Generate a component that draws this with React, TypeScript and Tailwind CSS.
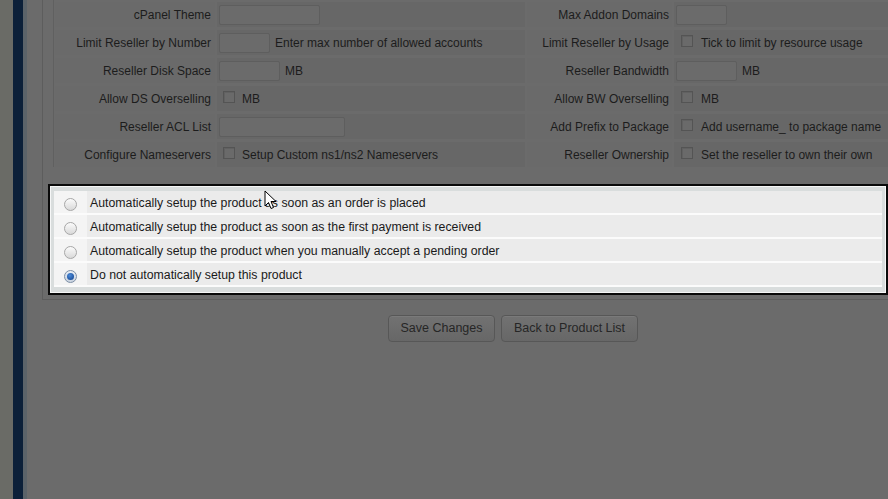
import React from "react";

const Input = ({ w }: { w: string }) => (
  <span className={`inline-block h-[20px] ${w} rounded-[2px] border border-[#5e5e5e] bg-[#6b6b6b]`} />
);

const Check = () => (
  <span className="inline-block h-[12px] w-[12px] border border-[#545454] bg-[#6a6a6a] shadow-[inset_1px_1px_0_#616161]" />
);

type Row = { l: string; left: React.ReactNode; r: string; right: React.ReactNode };

const rows: Row[] = [
  {
    l: "cPanel Theme",
    left: <Input w="w-[101px]" />,
    r: "Max Addon Domains",
    right: <Input w="w-[51px]" />,
  },
  {
    l: "Limit Reseller by Number",
    left: (
      <>
        <Input w="w-[51px]" />
        <span className="ml-[5px]">Enter max number of allowed accounts</span>
      </>
    ),
    r: "Limit Reseller by Usage",
    right: (
      <>
        <span className="ml-[5px]"><Check /></span>
        <span className="ml-[8px]">Tick to limit by resource usage</span>
      </>
    ),
  },
  {
    l: "Reseller Disk Space",
    left: (
      <>
        <Input w="w-[61px]" />
        <span className="ml-[5px]">MB</span>
      </>
    ),
    r: "Reseller Bandwidth",
    right: (
      <>
        <Input w="w-[61px]" />
        <span className="ml-[5px]">MB</span>
      </>
    ),
  },
  {
    l: "Allow DS Overselling",
    left: (
      <>
        <span className="ml-[4px]"><Check /></span>
        <span className="ml-[7px]">MB</span>
      </>
    ),
    r: "Allow BW Overselling",
    right: (
      <>
        <span className="ml-[5px]"><Check /></span>
        <span className="ml-[8px]">MB</span>
      </>
    ),
  },
  {
    l: "Reseller ACL List",
    left: <Input w="w-[126px]" />,
    r: "Add Prefix to Package",
    right: (
      <>
        <span className="ml-[5px]"><Check /></span>
        <span className="ml-[8px]">Add username_ to package name</span>
      </>
    ),
  },
  {
    l: "Configure Nameservers",
    left: (
      <>
        <span className="ml-[4px]"><Check /></span>
        <span className="ml-[7px]">Setup Custom ns1/ns2 Nameservers</span>
      </>
    ),
    r: "Reseller Ownership",
    right: (
      <>
        <span className="ml-[5px]"><Check /></span>
        <span className="ml-[8px]">Set the reseller to own their own</span>
      </>
    ),
  },
];

const options = [
  "Automatically setup the product as soon as an order is placed",
  "Automatically setup the product as soon as the first payment is received",
  "Automatically setup the product when you manually accept a pending order",
  "Do not automatically setup this product",
];

const Radio = ({ checked }: { checked?: boolean }) =>
  checked ? (
    <span className="flex h-[13px] w-[13px] items-center justify-center rounded-full border border-[#7d8fa6] bg-gradient-to-b from-[#e9eef5] to-[#c9d3df]">
      <span className="h-[7px] w-[7px] rounded-full bg-[radial-gradient(circle_at_40%_35%,#4b8ad8,#0f3f8a)]" />
    </span>
  ) : (
    <span className="block h-[13px] w-[13px] rounded-full border border-[#a7a7a7] bg-gradient-to-b from-[#fbfbfb] to-[#d9d9d9]" />
  );

export default function App() {
  return (
    <div className="relative flex h-[499px] w-[888px] overflow-hidden bg-[#6b6b6b] font-['Liberation_Sans',Arial,sans-serif] text-[12px] text-[#1c1c1c]">
      <div className="w-[13px] shrink-0 bg-[#6a6b66]" />
      <div className="w-[10px] shrink-0 bg-[#0c2039]" />
      <div className="w-[4px] shrink-0 bg-[#5b6369]" />
      <div className="w-[15px] shrink-0" />
      <div className="flex w-[942px] shrink-0 flex-col">
        <div className="border-b border-l border-[#5d5d5d] pb-[4px]">
          <div className="ml-[10px] border-l border-[#606060] pl-[1px] pt-[2px]">
            <div className="grid grid-cols-[160px_308px_145px_1fr] gap-x-[2px] gap-y-[3px]">
              {rows.map((r) => (
                <React.Fragment key={r.l}>
                  <div className="flex h-[25px] items-center justify-end bg-[#6a6a6a] pr-[4px] pt-px">{r.l}</div>
                  <div className="flex h-[25px] items-center whitespace-nowrap bg-[#676767] pl-[2px] pt-px">{r.left}</div>
                  <div className="flex h-[25px] items-center justify-end bg-[#6a6a6a] pr-[3px] pt-px">{r.r}</div>
                  <div className="flex h-[25px] items-center overflow-hidden whitespace-nowrap bg-[#676767] pl-[2px] pt-px">{r.right}</div>
                </React.Fragment>
              ))}
            </div>
          </div>
          <div className="ml-[5px] mt-[17px] w-[840px] border-2 border-[#0a0a0a] bg-[#f6f7f7] p-px">
            <div className="border-[3px] border-b-[5px] border-t-[4px] border-[#d9dddd]">
              <div className="flex flex-col gap-[2px] bg-[#fbfbfb] pb-[2px]">
                {options.map((o, i) => (
                  <div key={o} className="flex h-[22px]">
                    <div className="flex w-[33px] items-center justify-center bg-[#f4f4f4] pt-[4px]">
                      <Radio checked={i === 3} />
                    </div>
                    <div className="flex flex-1 items-center bg-[#ebebeb] pl-[3px] pt-[3px] text-[12.3px] text-[#1a1a1a]">{o}</div>
                  </div>
                ))}
              </div>
            </div>
          </div>
        </div>
        <div className="mt-[15px] flex justify-center gap-[6px]">
          <button className="h-[27px] w-[107px] rounded-[4px] border border-[#575757] bg-gradient-to-b from-[#727272] to-[#676767] text-[12.5px] text-[#262626] shadow-[inset_0_1px_0_#7a7a7a]">
            Save Changes
          </button>
          <button className="h-[27px] w-[137px] rounded-[4px] border border-[#575757] bg-gradient-to-b from-[#727272] to-[#676767] text-[12.5px] text-[#262626] shadow-[inset_0_1px_0_#7a7a7a]">
            Back to Product List
          </button>
        </div>
      </div>
      <svg className="absolute left-[264px] top-[190px]" width="13" height="20" viewBox="0 0 13 20">
        <path d="M1 1 L1 16 L4.5 12.5 L7 18.5 L9.5 17.5 L7 11.5 L12 11.5 Z" fill="#fff" stroke="#000" strokeWidth="1" strokeLinejoin="round" />
      </svg>
    </div>
  );
}
